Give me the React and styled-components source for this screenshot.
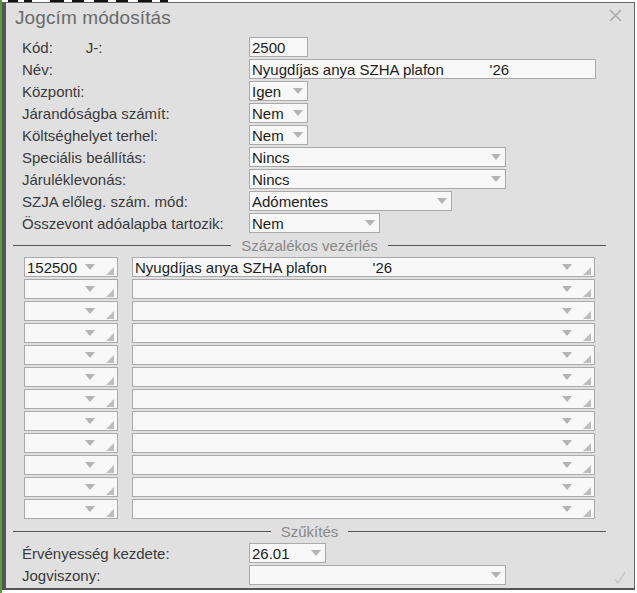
import React from 'react'
import styled, { createGlobalStyle } from 'styled-components'

const Global = createGlobalStyle`
  html, body { margin: 0; padding: 0; background: #fff; }
  body { font-family: "Liberation Sans", Arial, sans-serif; }
`

const Page = styled.div`
  display: flex;
  width: 637px;
  height: 593px;
  overflow: hidden;
`

const GreenStripe = styled.div`
  width: 2px;
  background: #5b9b32;
`

const Column = styled.div`
  display: flex;
  flex-direction: column;
  width: 633px;
`

const Backdrop = styled.div`
  height: 2px;
  overflow: hidden;
  svg { display: block; }
`

const Window = styled.div`
  height: 588px;
  box-sizing: border-box;
  background: #e0e0e0;
  border-left: 4px solid #555;
  border-top: 1px solid #666;
  border-right: 1px solid #666;
  border-bottom: 2px solid #555;
  display: flex;
  flex-direction: column;
  position: relative;
`

const TitleBar = styled.div`
  height: 33px;
  display: flex;
  align-items: center;
  justify-content: space-between;
  padding: 0 12px 0 9px;
`

const Title = styled.div`
  font-size: 19px;
  color: #6a6a6a;
  margin-top: -4px;
  letter-spacing: 0.1px;
`

const Close = styled.div`
  width: 13px;
  height: 13px;
  margin-top: -10px;
`

const Form = styled.div`
  padding-left: 16px;
  display: flex;
  flex-direction: column;
`

const Row = styled.div`
  display: grid;
  grid-template-columns: 227px auto;
  height: 22px;
  align-items: center;
`

const Label = styled.div`
  font-size: 15px;
  color: #3a3a3a;
  display: flex;
  white-space: nowrap;
  span { margin-left: 33px; }
`

const Field = styled.div`
  width: ${p => p.$w}px;
  height: 20px;
  box-sizing: border-box;
  border: 1px solid #aaa;
  background: #f8f8f8;
  display: flex;
  align-items: center;
  padding: 0 ${p => p.$pr || 4}px 0 2px;
  font-size: 15px;
  color: #1c1c1c;
  white-space: pre;
  overflow: hidden;
`

const Arrow = styled.i`
  margin-left: auto;
  width: 0;
  height: 0;
  border-left: 5px solid transparent;
  border-right: 5px solid transparent;
  border-top: 6px solid #b4b4b4;
  flex-shrink: 0;
`

const Resize = styled.i`
  width: 0;
  height: 0;
  margin: 0 0 -8px 11px;
  border-left: 8px solid transparent;
  border-bottom: 8px solid #bdbdbd;
  flex-shrink: 0;
`

const Divider = styled.div`
  height: 22px;
  margin: 0 28px 0 7px;
  display: flex;
  align-items: center;
  gap: 10px;
  font-size: 15px;
  color: #888;
  &::before, &::after {
    content: '';
    flex: 1;
    height: 1px;
    background: #555;
  }
`

const Table = styled.div`
  display: flex;
  flex-direction: column;
  gap: 2px;
  padding: 1px 0 1px 18px;
`

const TableRow = styled.div`
  display: flex;
  gap: 14px;
`

const Check = styled.div`
  position: absolute;
  right: 8px;
  bottom: 5px;
  width: 12px;
  height: 13px;
`

const Select = ({ w, children }) => (
  <Field $w={w}>{children}<Arrow /></Field>
)

const GridCell = ({ w, children }) => (
  <Field $w={w} $pr={3}>{children}<Arrow /><Resize /></Field>
)

const top = [
  ['Központi:', 'Igen', 59],
  ['Járandóságba számít:', 'Nem', 59],
  ['Költséghelyet terhel:', 'Nem', 59],
  ['Speciális beállítás:', 'Nincs', 257],
  ['Járuléklevonás:', 'Nincs', 257],
  ['SZJA előleg. szám. mód:', 'Adómentes', 203],
  ['Összevont adóalapba tartozik:', 'Nem', 131],
]

const name = 'Nyugdíjas anya SZHA plafon           \'26'

// fragments of the page behind the dialog, peeking out above it
const blobs = [[6, 10], [22, 8], [48, 14], [70, 12], [92, 14], [114, 12], [136, 14], [158, 8]]

export default function App() {
  const rows = Array.from({ length: 12 }, (_, i) => i)
  return (
    <Page>
      <Global />
      <GreenStripe />
      <Column>
        <Backdrop>
          <svg width="633" height="2">
            {blobs.map(([x, w]) => <rect key={x} x={x} y="0" width={w} height="2" fill="#111" />)}
          </svg>
        </Backdrop>
        <Window>
          <TitleBar>
            <Title>Jogcím módosítás</Title>
            <Close>
              <svg width="13" height="13" viewBox="0 0 13 13">
                <path d="M1 1L12 12M12 1L1 12" stroke="#ababab" strokeWidth="1.6" />
              </svg>
            </Close>
          </TitleBar>
          <Form>
            <Row>
              <Label>Kód:<span>J-:</span></Label>
              <Field $w={59}>2500</Field>
            </Row>
            <Row>
              <Label>Név:</Label>
              <Field $w={347}>{name}</Field>
            </Row>
            {top.map(([l, v, w]) => (
              <Row key={l}>
                <Label>{l}</Label>
                <Select w={w}>{v}</Select>
              </Row>
            ))}
          </Form>
          <Divider>Százalékos vezérlés</Divider>
          <Table>
            {rows.map(i => (
              <TableRow key={i}>
                <GridCell w={94}>{i === 0 ? '152500' : ''}</GridCell>
                <GridCell w={463}>{i === 0 ? name : ''}</GridCell>
              </TableRow>
            ))}
          </Table>
          <Divider>Szűkítés</Divider>
          <Form>
            <Row>
              <Label>Érvényesség kezdete:</Label>
              <Select w={77}>26.01</Select>
            </Row>
            <Row>
              <Label>Jogviszony:</Label>
              <Select w={257}></Select>
            </Row>
          </Form>
          <Check>
            <svg width="12" height="13" viewBox="0 0 12 13">
              <path d="M1 8L4 12L11 1" fill="none" stroke="#c8c8c8" strokeWidth="1.5" />
            </svg>
          </Check>
        </Window>
      </Column>
    </Page>
  )
}
